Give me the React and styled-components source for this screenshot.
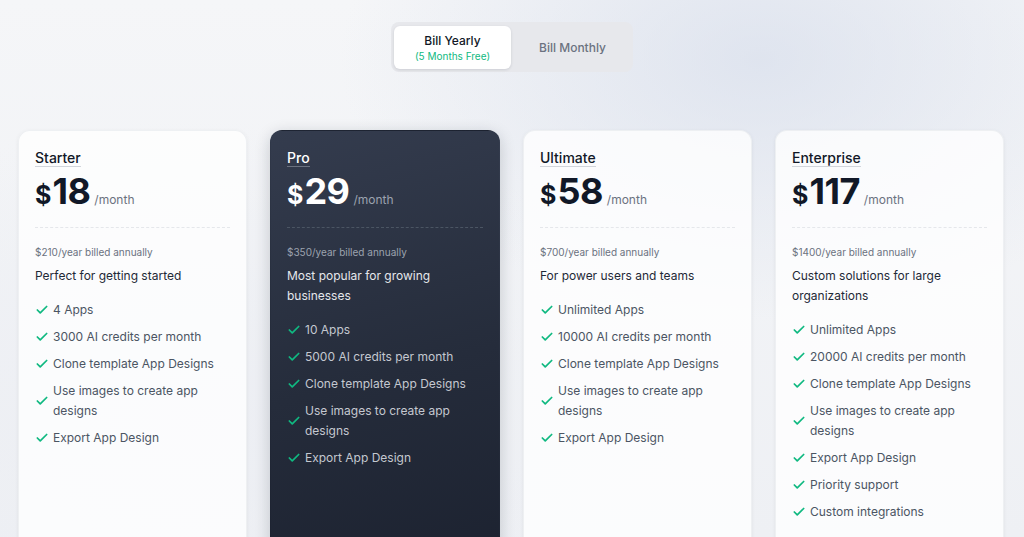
import React from 'react';
import {createGlobalStyle, styled} from 'styled-components';
import {Check} from 'lucide-react';

const GlobalStyle = createGlobalStyle`
  html, body {
    margin: 0;
    padding: 0;
    height: 100%;
  }
  body {
    font-family: "Inter", "Noto Sans", sans-serif;
    background: #f3f4f7;
    overflow: hidden;
  }
`

const Page = styled.div`
  width: 1024px;
  height: 537px;
  overflow: hidden;
  background:
    radial-gradient(ellipse 420px 260px at 760px 60px, rgba(214, 221, 235, 0.7), transparent),
    radial-gradient(ellipse 500px 300px at 200px 420px, rgba(236, 238, 243, 0.9), transparent),
    linear-gradient(180deg, #f5f6f8 0%, #eef0f4 100%);
  display: flex;
  flex-direction: column;
  align-items: center;
  padding-top: 22px;
  box-sizing: border-box;
`

const Toggle = styled.div`
  display: flex;
  align-items: center;
  gap: 4px;
  padding: 4px 3px;
  width: 242px;
  height: 50px;
  box-sizing: border-box;
  background: #e7e8ec;
  border-radius: 8px;
`

const ToggleButton = styled.button`
  border: none;
  font-family: inherit;
  display: flex;
  flex-direction: column;
  align-items: center;
  justify-content: center;
  height: 43px;
  border-radius: 6px;
  width: ${p => p.$active ? '118px' : '116px'};
  background: ${p => p.$active ? '#ffffff' : 'transparent'};
  box-shadow: ${p => p.$active ? '0 1px 3px rgba(15, 23, 42, 0.12)' : 'none'};
  color: ${p => p.$active ? '#111827' : '#6b7280'};
  font-size: 12px;
  font-weight: 500;
  padding: 0;
  cursor: pointer;
`

const FreeNote = styled.span`
  color: #10b981;
  font-size: 10px;
  font-weight: 400;
  margin-top: 2px;
`

const Cards = styled.div`
  align-self: flex-start;
  margin-left: 18px;
  display: grid;
  grid-template-columns: 229px 230px 229px 229px;
  gap: 23px;
  margin-top: 58px;
  align-items: start;
`

const Card = styled.div`
  height: 440px;
  box-sizing: border-box;
  padding: 16px 16px;
  border-radius: 12px;
  background: ${p => p.$dark
    ? 'linear-gradient(165deg, #343c4e 0%, #252c3b 55%, #1c2230 100%)'
    : 'rgba(255, 255, 255, 0.78)'};
  box-shadow: ${p => p.$dark
    ? '0 4px 16px rgba(15, 23, 42, 0.2)'
    : '0 1px 4px rgba(15, 23, 42, 0.06)'};
  border: 1px solid ${p => p.$dark ? 'transparent' : 'rgba(229, 231, 235, 0.6)'};
`

const Title = styled.div`
  display: inline-block;
  font-size: 14px;
  font-weight: 500;
  line-height: 17px;
  color: ${p => p.$dark ? '#ffffff' : '#111827'};
  border-bottom: 1px solid ${p => p.$dark ? '#6b7280' : '#d1d5db'};
`

const PriceRow = styled.div`
  display: flex;
  align-items: baseline;
  margin-top: 4px;
  color: ${p => p.$dark ? '#ffffff' : '#111827'};
  font-weight: 700;
  height: 40px;
`

const Currency = styled.span`
  font-size: 25px;
  line-height: 40px;
  margin-right: 1px;
`

const Amount = styled.span`
  font-size: 36px;
  line-height: 40px;
  letter-spacing: -0.5px;
`

const Period = styled.span`
  margin-left: 4px;
  font-size: 12px;
  font-weight: 400;
  color: ${p => p.$dark ? '#9ca3af' : '#6b7280'};
`

const Divider = styled.div`
  margin-top: 16px;
  border-top: 1px dashed ${p => p.$dark ? '#4b5563' : '#e5e7eb'};
`

const Annual = styled.div`
  margin-top: 16px;
  font-size: 10px;
  line-height: 16px;
  color: ${p => p.$dark ? '#9ca3af' : '#6b7280'};
`

const Description = styled.div`
  margin-top: 6px;
  font-size: 12px;
  line-height: 20px;
  color: ${p => p.$dark ? '#e5e7eb' : '#1f2937'};
`

const Features = styled.ul`
  list-style: none;
  margin: 14px 0 0;
  padding: 0;
  display: flex;
  flex-direction: column;
  gap: 7px;
`

const Feature = styled.li`
  display: flex;
  align-items: center;
  gap: 4px;
  font-size: 12px;
  line-height: 20px;
  color: ${p => p.$dark ? '#c4c8d0' : '#4b5563'};

  svg {
    flex-shrink: 0;
    color: #10b981;
  }
`

const plans = [
    {
        name: 'Starter', price: 18, annual: '$210/year billed annually',
        description: 'Perfect for getting started',
        features: ['4 Apps', '3000 AI credits per month', 'Clone template App Designs', 'Use images to create app designs', 'Export App Design']
    },
    {
        name: 'Pro', price: 29, annual: '$350/year billed annually', dark: true,
        description: 'Most popular for growing businesses',
        features: ['10 Apps', '5000 AI credits per month', 'Clone template App Designs', 'Use images to create app designs', 'Export App Design']
    },
    {
        name: 'Ultimate', price: 58, annual: '$700/year billed annually',
        description: 'For power users and teams',
        features: ['Unlimited Apps', '10000 AI credits per month', 'Clone template App Designs', 'Use images to create app designs', 'Export App Design']
    },
    {
        name: 'Enterprise', price: 117, annual: '$1400/year billed annually',
        description: 'Custom solutions for large organizations',
        features: ['Unlimited Apps', '20000 AI credits per month', 'Clone template App Designs', 'Use images to create app designs', 'Export App Design', 'Priority support', 'Custom integrations']
    }
]

export default function App() {
    return (
        <Page>
            <GlobalStyle/>
            <Toggle>
                <ToggleButton $active type='button'>
                    Bill Yearly
                    <FreeNote>(5 Months Free)</FreeNote>
                </ToggleButton>
                <ToggleButton type='button'>Bill Monthly</ToggleButton>
            </Toggle>
            <Cards>
                {plans.map(plan => (
                    <Card key={plan.name} $dark={plan.dark}>
                        <Title $dark={plan.dark}>{plan.name}</Title>
                        <PriceRow $dark={plan.dark}>
                            <Currency>$</Currency>
                            <Amount>{plan.price}</Amount>
                            <Period $dark={plan.dark}>/month</Period>
                        </PriceRow>
                        <Divider $dark={plan.dark}/>
                        <Annual $dark={plan.dark}>{plan.annual}</Annual>
                        <Description $dark={plan.dark}>{plan.description}</Description>
                        <Features>
                            {plan.features.map(feature => (
                                <Feature key={feature} $dark={plan.dark}>
                                    <Check size={14} strokeWidth={3}/>
                                    <span>{feature}</span>
                                </Feature>
                            ))}
                        </Features>
                    </Card>
                ))}
            </Cards>
        </Page>
    )
}
